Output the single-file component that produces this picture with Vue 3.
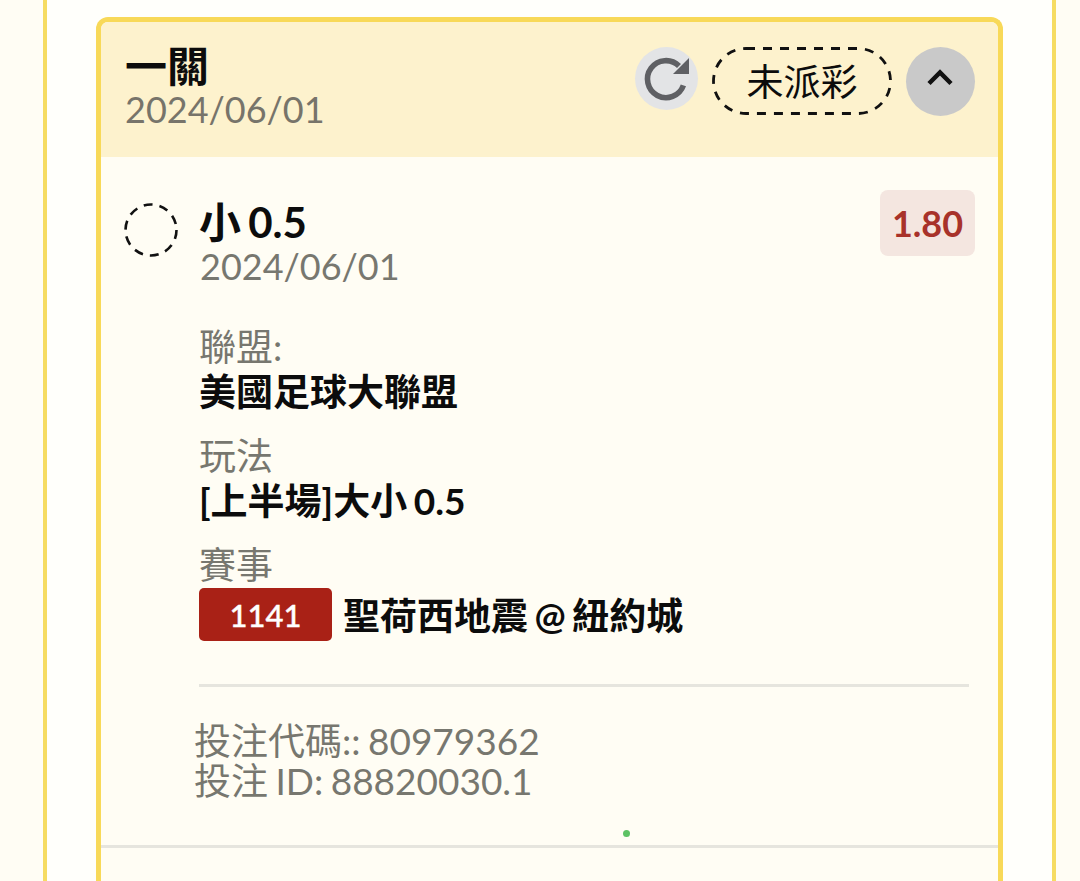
<script setup>
const details = [
  { label: '聯盟:', value: '美國足球大聯盟' },
  { label: '玩法', value: '[上半場]大小 0.5' },
]
</script>

<template>
  <div class="page">
    <section class="card">
      <header class="head">
        <div class="head-text">
          <div class="title">一關</div>
          <div class="date">2024/06/01</div>
        </div>
        <div class="actions">
          <div class="refresh">
            <svg width="48" height="48" viewBox="0 0 24 24">
              <path d="M20.2 15.2A9.25 9.25 0 1 1 18 5.5" fill="none" stroke="#5f6064" stroke-width="2.8" />
              <path d="M23 1.5V9.5H15Z" fill="#5f6064" />
            </svg>
          </div>
          <svg class="pill-line" width="180" height="68" viewBox="0 0 180 68">
            <rect x="1.5" y="1.5" width="177" height="65" rx="32.5" fill="none" stroke="#111" stroke-width="2.8" stroke-dasharray="9 8" />
          </svg>
          <div class="pill">未派彩</div>
          <div class="toggle">
            <svg width="28" height="18" viewBox="0 0 28 18">
              <path d="M2 15.5L13 4.5L24 15.5" fill="none" stroke="#111" stroke-width="4.5" />
            </svg>
          </div>
        </div>
      </header>

      <div class="body">
        <div class="bet-row">
          <svg class="status" width="54" height="54" viewBox="0 0 54 54">
            <circle cx="27" cy="27" r="25.5" fill="none" stroke="#111" stroke-width="2.6" stroke-dasharray="9 7" />
          </svg>
          <div class="bet-main">
            <div class="bet-title">小 0.5</div>
            <div class="bet-date">2024/06/01</div>
          </div>
          <div class="odds">1.80</div>
        </div>

        <div class="details">
          <div v-for="item in details" :key="item.label" class="detail">
            <div class="label">{{ item.label }}</div>
            <div class="value">{{ item.value }}</div>
          </div>
          <div class="detail last">
            <div class="label">賽事</div>
            <div class="match">
              <span class="code">1141</span>
              <span class="value match-name">聖荷西地震 @ 紐約城</span>
            </div>
          </div>
        </div>

        <div class="divider"></div>

        <div class="refs">
          <div>投注代碼:: 80979362</div>
          <div>投注 ID: 88820030.1</div>
        </div>

        <span class="dot"></span>
      </div>
      <div class="next"></div>
    </section>
  </div>
</template>

<style>
html, body { margin: 0; background: #fffdf4; }
</style>

<style scoped>
.page {
  box-sizing: border-box;
  width: 1013px;
  height: 881px;
  margin-left: 43px;
  padding: 17px 49px 0;
  overflow: hidden;
  background: #fffffb;
  border-left: 4px solid #f6dc62;
  border-right: 4px solid #f6dc62;
  font-family: Lato, "Noto Sans CJK TC", sans-serif;
  color: #0c0c0c;
}
.card {
  position: relative;
  background: #fffdf4;
  border: 5px solid #f8d958;
  border-bottom: 0;
  border-radius: 12px 12px 0 0;
}
.head {
  display: flex;
  justify-content: space-between;
  height: 135px;
  box-sizing: border-box;
  padding: 25px 23px 0 24px;
  background: #fdf2cd;
  border-radius: 7px 7px 0 0;
}
.title {
  font-size: 42px;
  font-weight: 700;
  line-height: 42px;
  margin-top: -2px;
}
.date, .bet-date {
  font-size: 36px;
  line-height: 42px;
  color: #77746a;
}
.date { margin-top: 1px; }
.actions {
  position: relative;
  display: flex;
  align-items: flex-start;
}
.refresh {
  width: 63px;
  height: 63px;
  border-radius: 50%;
  background: #e3e4e6;
  display: flex;
  align-items: center;
  justify-content: center;
}
.pill-line {
  position: absolute;
  left: 77px;
  top: 0;
}
.pill {
  box-sizing: border-box;
  width: 180px;
  height: 68px;
  margin: 0 14px;
  padding-bottom: 2px;
  display: flex;
  align-items: center;
  justify-content: center;
  font-size: 37px;
}
.toggle {
  width: 69px;
  height: 69px;
  border-radius: 50%;
  background: #c9c9c9;
  display: flex;
  align-items: center;
  justify-content: center;
  padding-bottom: 10px;
  box-sizing: border-box;
}
.body {
  position: relative;
  height: 689px;
  box-sizing: border-box;
  padding: 33px 23px 0 23px;
}
.bet-row {
  display: flex;
  align-items: flex-start;
}
.status {
  margin-top: 13px;
  flex: none;
}
.bet-main {
  flex: 1;
  margin-left: 21px;
}
.bet-title {
  font-size: 42px;
  font-weight: 700;
  line-height: 42px;
  margin-top: 11px;
  word-spacing: -3px;
}
.bet-date { color: #77776f; margin-top: 2px; margin-left: 1px; }
.odds {
  width: 95px;
  height: 66px;
  border-radius: 8px;
  background: #f4e6e0;
  color: #a8322a;
  font-size: 36px;
  font-weight: 700;
  display: flex;
  align-items: center;
  justify-content: center;
}
.details {
  margin: 38px 0 0 75px;
}
.detail {
  height: 109px;
}
.detail.last {
  height: 141px;
}
.label {
  font-size: 37px;
  line-height: 44px;
  color: #77776f;
}
.value {
  font-size: 37px;
  font-weight: 700;
  line-height: 45px;
  word-spacing: -2.5px;
}
.match {
  display: flex;
  align-items: center;
  gap: 11px;
  margin-top: 1px;
}
.match-name {
  padding-top: 2px;
}
.code {
  width: 133px;
  height: 53px;
  border-radius: 5px;
  background: #a92116;
  color: #fff;
  font-size: 31px;
  font-weight: 500;
  -webkit-text-stroke: 0.4px #fff;
  display: flex;
  align-items: center;
  justify-content: center;
}
.divider {
  height: 3px;
  margin: 0 6px 0 75px;
  background: #e6e5de;
}
.refs {
  margin: 34px 0 0 70px;
  font-size: 37px;
  line-height: 40px;
  word-spacing: -2px;
  color: #77776f;
}
.dot {
  position: absolute;
  left: 522px;
  top: 673px;
  width: 7px;
  height: 7px;
  border-radius: 50%;
  background: #5dc264;
}
.next {
  height: 60px;
  border-top: 3px solid #e6e5de;
  margin-top: -1px;
}
</style>
